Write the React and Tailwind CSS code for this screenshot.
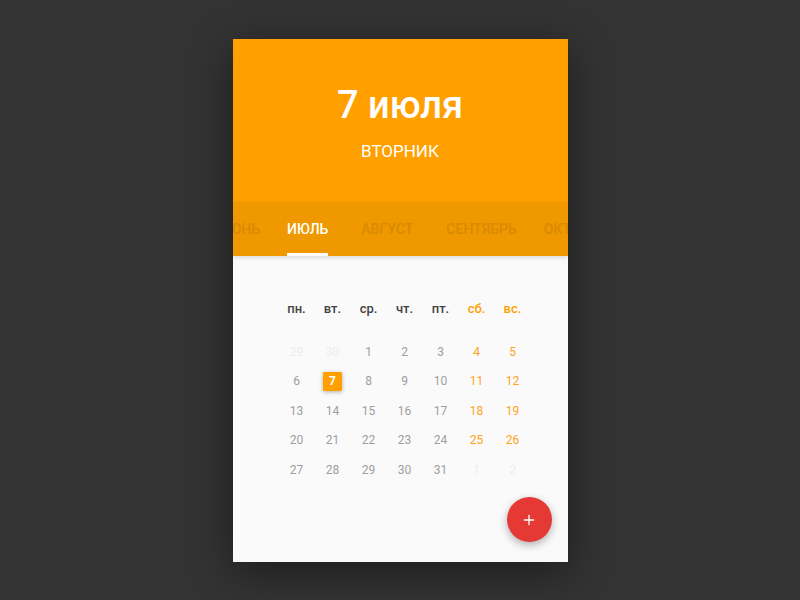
import { Plus } from 'lucide-react';

const MONTHS = [
  { name: 'ИЮНЬ', gap: 'mr-[27px]' },
  { name: 'ИЮЛЬ', gap: 'mr-[33px]' },
  { name: 'АВГУСТ', gap: 'mr-[33px]' },
  { name: 'СЕНТЯБРЬ', gap: 'mr-[27px]' },
  { name: 'ОКТЯБРЬ', gap: '' },
];
const WEEKDAYS = ['пн.', 'вт.', 'ср.', 'чт.', 'пт.', 'сб.', 'вс.'];

// июль: начинается со среды, 29 и 30 — из июня, 1 и 2 — из августа
const DAYS = [
  [29, 30, 1, 2, 3, 4, 5],
  [6, 7, 8, 9, 10, 11, 12],
  [13, 14, 15, 16, 17, 18, 19],
  [20, 21, 22, 23, 24, 25, 26],
  [27, 28, 29, 30, 31, 1, 2],
];

const Calendar = () => {
  const active = 1;
  const selected = 7;

  return (
    <div className="w-full min-h-[600px] bg-[#333333] pt-[39px]" style={{ fontFamily: 'Roboto, "Noto Sans", sans-serif' }}>
      <div className="relative mx-auto w-[335px] h-[523px] flex flex-col bg-[#fafafa] shadow-[0_10px_40px_rgba(0,0,0,0.45)] overflow-hidden">
        {/* Шапка с датой */}
        <div className="h-[163px] shrink-0 bg-[#ffa000] flex flex-col items-center text-white">
          <div className="mt-[42px] text-[38px] leading-[48px] font-medium">7 июля</div>
          <div className="mt-[12px] text-[17px] leading-[20px]">ВТОРНИК</div>
        </div>

        {/* Месяцы */}
        <div className="relative z-10 h-[54px] shrink-0 bg-[#ef9800] shadow-[0_2px_4px_rgba(0,0,0,0.12)] overflow-hidden">
          <div className="flex h-full ml-[-14px] whitespace-nowrap">
            {MONTHS.map((m, i) => (
              <div
                key={m.name}
                className={`${m.gap} h-full flex items-center text-[14px] font-medium border-y-[3px] border-t-transparent ${
                  i === active ? 'text-white border-b-white' : 'text-[#d88a00] border-b-transparent'
                }`}
              >
                {m.name}
              </div>
            ))}
          </div>
        </div>

        {/* Сетка дней */}
        <div className="flex-1 pt-[38px] pl-[46px]">
          <div className="grid grid-cols-[repeat(7,36px)] h-[30px] items-center">
            {WEEKDAYS.map((d, i) => (
              <div
                key={d}
                className={`text-center text-[13px] font-medium ${i >= 5 ? 'text-[#ffa000]' : 'text-[#424242]'}`}
              >
                {d}
              </div>
            ))}
          </div>
          <div className="mt-[13px]">
            {DAYS.map((week, r) => (
              <div key={r} className="grid grid-cols-[repeat(7,36px)] h-[29.5px] items-center">
                {week.map((d, c) => {
                  const outside = (r === 0 && d > 20) || (r === 4 && d < 10);
                  const isSel = !outside && d === selected;
                  let color = c >= 5 ? 'text-[#ffa21a]' : 'text-[#9e9e9e]';
                  if (outside) color = 'text-[#ededed]';
                  return (
                    <div key={c} className="flex justify-center">
                      {isSel ? (
                        <div className="w-[19px] h-[19px] rounded-[1px] bg-[#ffa000] text-white text-[12px] font-bold flex items-center justify-center shadow-[0_1px_4px_rgba(0,0,0,0.3)]">
                          {d}
                        </div>
                      ) : (
                        <span className={`text-[12px] ${color}`}>{d}</span>
                      )}
                    </div>
                  );
                })}
              </div>
            ))}
          </div>
        </div>

        {/* Кнопка добавления */}
        <button className="absolute right-[16px] bottom-[20px] w-[45px] h-[45px] rounded-full bg-[#e53935] flex items-center justify-center shadow-[0_3px_8px_rgba(0,0,0,0.3)]">
          <Plus className="w-[16px] h-[16px] text-white" strokeWidth={2} />
        </button>
      </div>
    </div>
  );
};

export default function App() {
  return <Calendar />;
}
